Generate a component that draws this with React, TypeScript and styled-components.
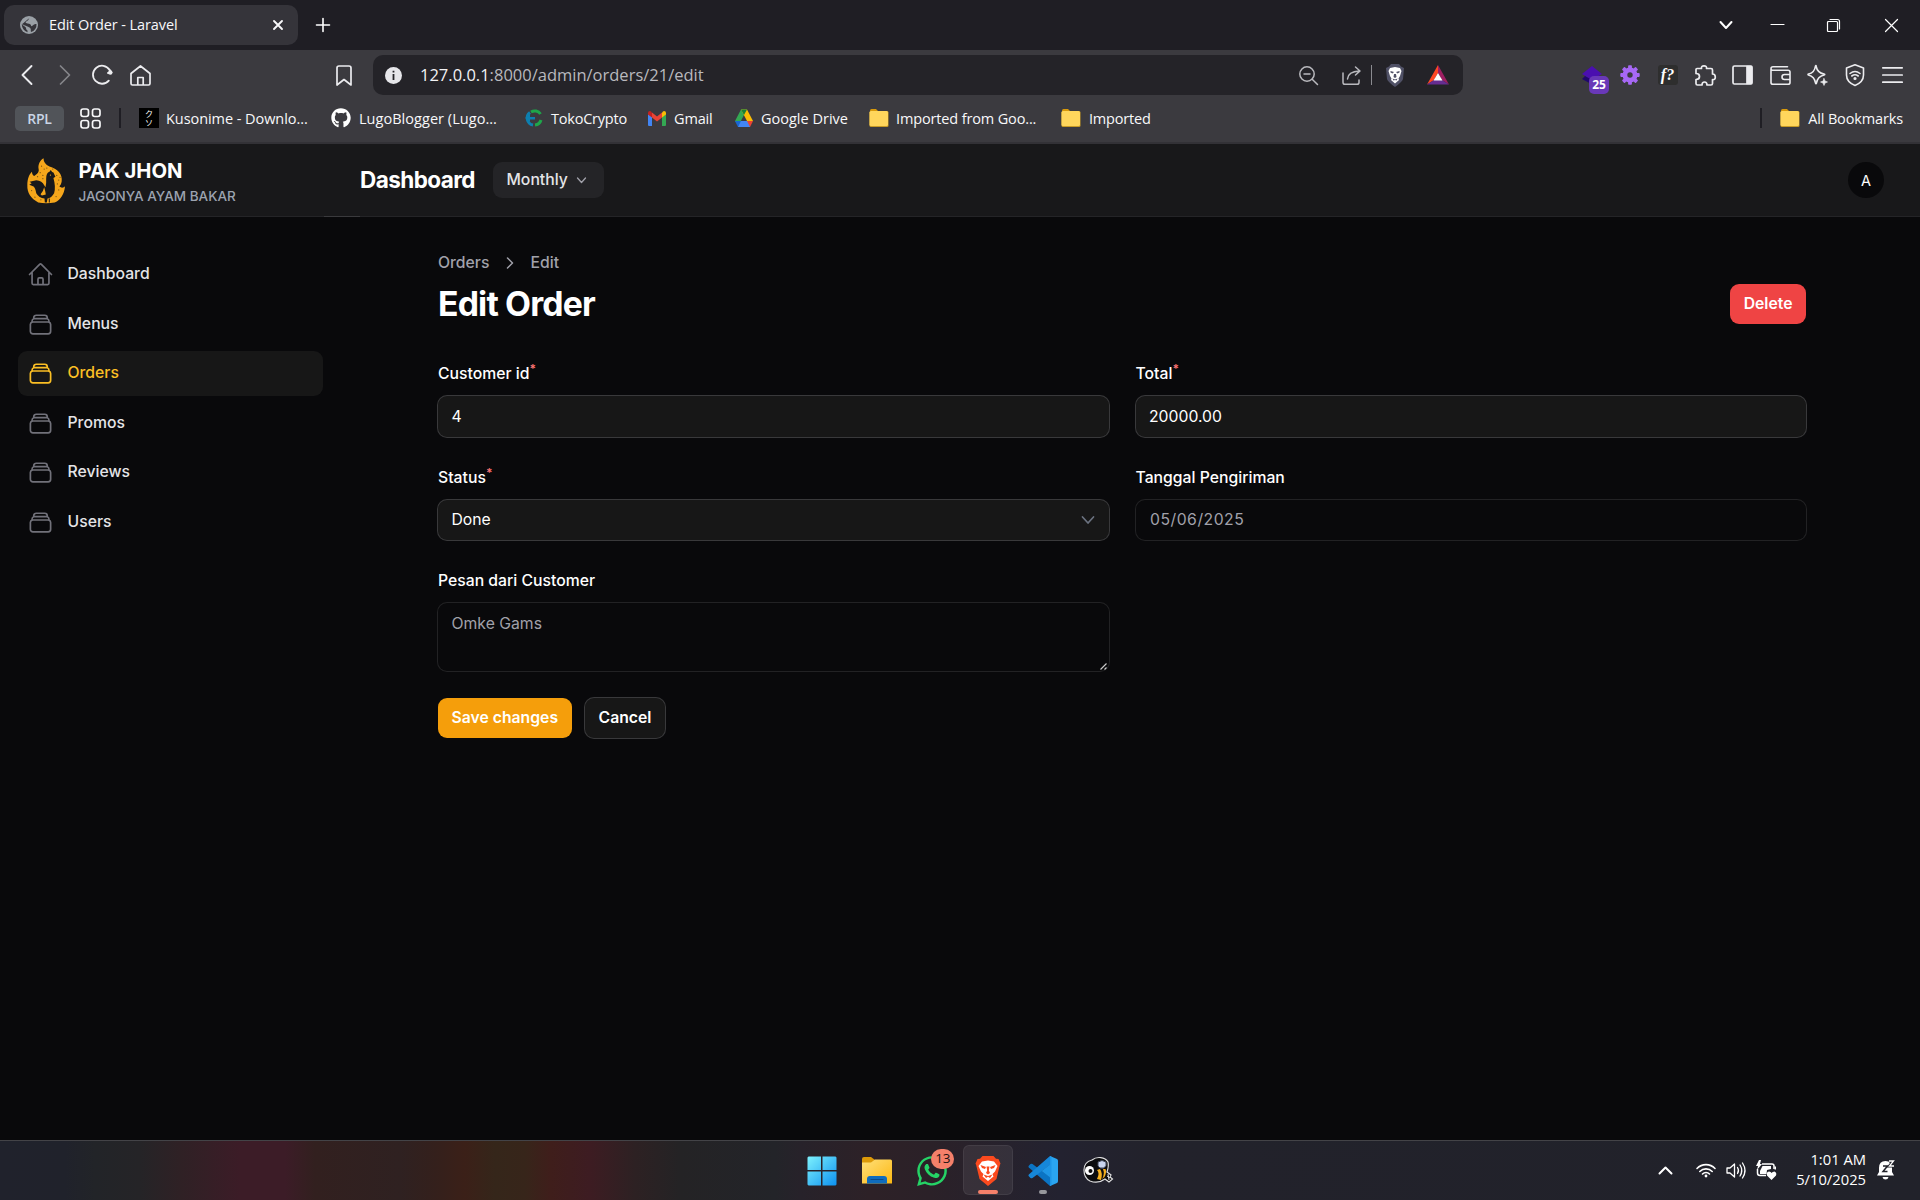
import React from "react";
import styled, { createGlobalStyle, css } from "styled-components";
import { HiOutlineHome, HiOutlineRectangleStack } from "react-icons/hi2";
import { FaGithub, FaWhatsapp } from "react-icons/fa";

const SYSTEM = `"Open Sans", "Noto Sans", sans-serif`;
const PAGE = `Inter, "Liberation Sans", sans-serif`;

const GlobalStyle = createGlobalStyle`
  * { box-sizing: border-box; }
  html, body { margin: 0; padding: 0; background: #09090b; }
  body { width: 1920px; height: 1200px; overflow: hidden; }
  svg { display: block; flex: none; overflow: visible; }
  button { border: 0; margin: 0; padding: 0; background: none; color: inherit; font: inherit; }
`;

const Screen = styled.div`
  width: 1920px;
  height: 1200px;
  display: flex;
  flex-direction: column;
  background: #09090b;
  color: #fff;
  font-family: ${PAGE};
  overflow: hidden;
`;

/* ---------- browser ---------- */

const TabStrip = styled.div`
  height: 50px;
  flex: none;
  display: flex;
  align-items: center;
  background: #1f1e24;
  padding-left: 4px;
  font-family: ${SYSTEM};
`;

const Tab = styled.div`
  width: 294px;
  height: 40px;
  border-radius: 10px;
  background: #35343a;
  display: flex;
  align-items: center;
  padding: 0 15px 0 16px;
  font-size: 14.5px;
  letter-spacing: -0.1px;
  color: #f8f8fa;
`;

const TabTitle = styled.span`
  flex: 1;
  margin-left: 11px;
  padding-bottom: 2px;
  white-space: nowrap;
`;

const NewTab = styled.button`
  margin-left: 18px;
`;

const WindowControls = styled.div`
  margin-left: auto;
  display: flex;
  align-items: center;
`;

const Slot = styled.div<{ $w: number }>`
  width: ${(p) => p.$w}px;
  flex: none;
  display: flex;
  align-items: center;
  justify-content: center;
`;

const Toolbar = styled.div`
  height: 50px;
  flex: none;
  display: flex;
  align-items: center;
  background: #3b3a3f;
  padding-left: 8px;
  font-family: ${SYSTEM};
  color: #ececef;
`;

const AddressBar = styled.div`
  width: 1090px;
  height: 40px;
  margin-left: 12px;
  border-radius: 10px;
  background: #242328;
  display: flex;
  align-items: center;
  padding-left: 12px;
  padding-right: 5px;
`;

const Address = styled.span`
  margin-left: 18px;
  padding-bottom: 2px;
  flex: 1;
  font-size: 16.5px;
  color: #b9b9be;
  b { font-weight: 400; color: #f2f2f4; }
`;

const BarDivider = styled.i`
  width: 1px;
  height: 20px;
  background: #8b8b90;
`;

const Extensions = styled.div`
  display: flex;
  margin-left: auto;
  padding-right: 8px;
`;

const BadgedExtension = styled.div`
  position: relative;
  width: 28px;
  height: 28px;
  margin-top: 9px;
`;

const ExtensionCount = styled.span`
  position: absolute;
  left: 7px;
  top: 10px;
  width: 20px;
  height: 18px;
  border-radius: 5px;
  background: #6938b8;
  font-size: 12px;
  font-weight: 700;
  line-height: 18px;
  text-align: center;
  color: #fff;
`;

const FunctionExtension = styled.div`
  width: 20px;
  height: 20px;
  border-radius: 3px;
  background: #2e2e2e;
  font: italic 700 16px/19px "Liberation Serif", serif;
  text-align: center;
  color: #fff;
`;

const Bookmarks = styled.div`
  height: 44px;
  flex: none;
  display: flex;
  align-items: center;
  padding: 0 17px 6px 15px;
  background: #3b3a3f;
  border-bottom: 2px solid #323136;
  font-family: ${SYSTEM};
  font-size: 14.5px;
  color: #f8f8fa;
`;

const GroupChip = styled.div`
  width: 49px;
  height: 25px;
  border-radius: 5px;
  background: #515459;
  color: #c9d5e6;
  font-size: 14px;
  font-weight: 600;
  letter-spacing: -0.2px;
  line-height: 25px;
  text-align: center;
  margin-right: 16px;
`;

const DarkRule = styled.i<{ $ml?: string; $mr: number }>`
  width: 2px;
  height: 20px;
  background: #1f1e24;
  margin-left: ${(p) => p.$ml ?? "0"};
  margin-right: ${(p) => p.$mr}px;
`;

const Bookmark = styled.div<{ $w?: number; $ls?: number; $gap?: number }>`
  width: ${(p) => (p.$w ? p.$w + "px" : "auto")};
  flex: none;
  display: flex;
  align-items: center;
  gap: ${(p) => p.$gap ?? 8}px;
  white-space: nowrap;
  letter-spacing: ${(p) => p.$ls ?? -0.14}px;
`;

const KanaIcon = styled.span`
  width: 20px;
  height: 20px;
  background: #000;
  color: #fff;
  display: flex;
  flex-direction: column;
  align-items: center;
  justify-content: center;
  font: 8px/9px "Noto Sans CJK JP", sans-serif;
  letter-spacing: 0;
`;

/* ---------- page ---------- */

const TopBar = styled.header`
  height: 73px;
  flex: none;
  display: flex;
  align-items: center;
  padding: 0 36px 0 27px;
  background: #18181a;
  border-bottom: 1px solid #242427;
  position: relative;
`;

const BarSeam = styled.i`
  position: absolute;
  left: 324px;
  bottom: -1px;
  width: 36px;
  height: 1px;
  background: #3a3a3d;
`;

const Brand = styled.div`
  width: 333px;
  display: flex;
  gap: 13.5px;
  align-items: center;
`;

const BrandName = styled.div`
  font-size: 20.25px;
  font-weight: 700;
  line-height: 27px;
`;

const BrandTagline = styled.div`
  font-size: 13.5px;
  font-weight: 500;
  line-height: 18px;
  margin: 3px 0 -1px;
  color: #9ca3af;
`;

const BarTitle = styled.div`
  font-size: 22.5px;
  font-weight: 700;
  letter-spacing: -0.56px;
  width: 133px;
  padding-bottom: 1px;
  white-space: nowrap;
`;

const PeriodButton = styled.button`
  width: 111px;
  height: 36px;
  border-radius: 9px;
  background: #242427;
  display: flex;
  align-items: center;
  gap: 9px;
  padding-left: 13.5px;
  font-size: 15.75px;
  font-weight: 500;
  color: #e4e4e7;
  span { padding-bottom: 2px; }
`;

const Avatar = styled.div`
  width: 36px;
  height: 36px;
  margin-left: auto;
  border-radius: 50%;
  background: #09090b;
  font-size: 14.5px;
  line-height: 37px;
  text-align: center;
`;

const Body = styled.div`
  flex: 1;
  min-height: 0;
  display: flex;
`;

const Sidebar = styled.nav`
  width: 324px;
  padding: 34.75px 1px 0 18px;
  display: flex;
  flex-direction: column;
  gap: 4.5px;
`;

const NavItem = styled.a<{ $active?: boolean }>`
  height: 45px;
  border-radius: 9px;
  padding: 0 9px 1px;
  display: flex;
  align-items: center;
  gap: 13.5px;
  font-size: 15.75px;
  font-weight: 500;
  color: #e4e4e7;
  svg { color: #71717a; margin-top: 2px; }
  ${(p) =>
    p.$active &&
    css`
      background: #171717;
      color: #fbbf24;
      svg { color: #fbbf24; }
    `}
`;

const Main = styled.main`
  flex: 1;
  padding: 35px 114px 0;
`;

const Breadcrumbs = styled.div`
  height: 22.5px;
  display: flex;
  align-items: center;
  gap: 14px;
  font-size: 15.75px;
  font-weight: 500;
  color: #a1a1aa;
  span { padding-bottom: 2px; }
`;

const Heading = styled.div`
  display: flex;
  justify-content: space-between;
  align-items: center;
  margin: 9px 0 36px;
`;

const Title = styled.h1`
  margin: 0;
  font-size: 33.75px;
  line-height: 40.5px;
  font-weight: 700;
  letter-spacing: -0.84px;
`;

const Button = styled.button<{ $bg: string; $ring?: boolean }>`
  height: 40px;
  padding: 0 13.5px;
  border-radius: 9px;
  background: ${(p) => p.$bg};
  font-size: 15.75px;
  font-weight: 600;
  white-space: nowrap;
  box-shadow: ${(p) => (p.$ring ? "0 0 0 1px #39393b" : "none")};
`;

const Form = styled.div`
  display: grid;
  grid-template-columns: 1fr 1fr;
  gap: 27px;
`;

const FieldBox = styled.div`
  display: flex;
  flex-direction: column;
  gap: 9px;
`;

const Label = styled.label`
  height: 27px;
  line-height: 27px;
  font-size: 15.75px;
  font-weight: 500;
  sup {
    font-size: 11.8px;
    font-weight: 700;
    line-height: 0;
    vertical-align: 6.5px;
    color: #f87171;
  }
`;

const Control = styled.div<{ $disabled?: boolean; $h?: number }>`
  height: ${(p) => p.$h ?? 40.5}px;
  border-radius: 9px;
  padding: 0 15px 0 13.5px;
  display: flex;
  align-items: ${(p) => (p.$h ? "flex-start" : "center")};
  justify-content: space-between;
  padding-top: ${(p) => (p.$h ? "6.75px" : "0")};
  font-size: 15.75px;
  line-height: 27px;
  background: ${(p) => (p.$disabled ? "transparent" : "#171717")};
  color: ${(p) => (p.$disabled ? "#a1a1aa" : "#fff")};
  box-shadow: 0 0 0 1px ${(p) => (p.$disabled ? "#222224" : "#39393b")};
`;

const DateText = styled.span`
  padding-left: 1px;
  letter-spacing: 0.5px;
`;

const ResizeGrip = styled.svg`
  align-self: flex-end;
  margin: 0 -13px 0.5px 0;
`;

const Actions = styled.div`
  display: flex;
  gap: 13.5px;
  margin-top: 27px;
`;

/* ---------- taskbar ---------- */

const Taskbar = styled.footer`
  height: 60px;
  flex: none;
  display: grid;
  grid-template-columns: 1fr 326px 1fr;
  align-items: center;
  border-top: 1px solid #434347;
  font-family: ${SYSTEM};
  background: linear-gradient(
    90deg,
    #20222c 0, #20222b 65px, #222428 95px, #252427 140px, #2f2125 180px, #3c1c27 240px,
    #3c1c27 285px, #32201f 315px, #2f2121 400px, #34201c 435px, #3b2018 465px, #35261a 495px,
    #37251a 525px, #3f1e1b 550px, #3d1c22 590px, #2d2123 635px, #242325 680px, #232429 775px,
    #27222a 800px, #2d2127 870px, #2b2128 930px, #232230 1060px, #22222b 1150px, #21222a 1920px
  );
`;

const Pinned = styled.div`
  grid-column: 2;
  display: flex;
  justify-content: space-between;
  align-items: center;
  padding-bottom: 1px;
`;

const AppTile = styled.div<{ $active?: boolean }>`
  position: relative;
  width: 50px;
  height: 50px;
  border-radius: 6px;
  display: flex;
  align-items: center;
  justify-content: center;
  padding-top: 1px;
  ${(p) =>
    p.$active &&
    css`
      background: #ffffff12;
      box-shadow: inset 0 0 0 1px #ffffff10;
    `}
`;

const Indicator = styled.i<{ $w: number; $c: string }>`
  position: absolute;
  bottom: 1px;
  left: calc(50% - ${(p) => p.$w / 2}px);
  width: ${(p) => p.$w}px;
  height: 4px;
  border-radius: 2px;
  background: ${(p) => p.$c};
`;

const UnreadBadge = styled.span`
  position: absolute;
  left: 24px;
  top: 4px;
  width: 23px;
  height: 20px;
  border-radius: 10px;
  background: #f5806a;
  color: #1c1313;
  font-size: 13.5px;
  line-height: 19px;
  text-align: center;
`;

const Tray = styled.div`
  display: flex;
  align-items: center;
  justify-content: flex-end;
  padding: 0 25px 1px 0;
`;

const Clock = styled.div`
  width: 85.500px;
  margin-right: 11px;
  padding-bottom: 3px;
  text-align: right;
  font-size: 14.75px;
  line-height: 20px;
  white-space: nowrap;
`;

/* ---------- drawings ---------- */

type LineProps = { w: number; h: number; sw?: number; color?: string; children: React.ReactNode };

const Line = ({ w, h, sw = 1.5, color = "currentColor", children }: LineProps) => (
  <svg width={w} height={h} viewBox={`0 0 ${w} ${h}`} fill="none" stroke={color} strokeWidth={sw} strokeLinecap="round" strokeLinejoin="round">
    {children}
  </svg>
);

const Globe = () => (
  <svg width="18" height="18" viewBox="0 0 18 18">
    <circle cx="9" cy="9" r="9" fill="#9aa0a6" />
    <path d="M10 1.500C8 3 9 4 7 5S5 7 7.500 7.500 11 8 11 9.500 13 9.500 14 8.500 16 8 16.500 8 A7.500 7.500 0 0 1 11 16C10.500 14 11.500 13 9.500 11.500S6 10 5 9.500 3 8.500 1.700 8.500 M1.700 8.500C2 12 4 15 7.500 16.300 L7.500 14.500C6.500 14 6 13 6 12S4 10 1.700 8.500Z" fill="#35343a" />
  </svg>
);

const Folder = () => (
  <svg width="20" height="20" viewBox="0 0 20 20">
    <path d="M1 2.500Q1 1 2.500 1H7L9 3V8H1Z" fill="#d99a0b" />
    <rect x="0.500" y="3" width="19" height="16" rx="1.500" fill="#c79a25" />
    <rect x="0.500" y="3" width="18.500" height="15" rx="1.500" fill="#ffd65c" />
  </svg>
);

const TokoIcon = () => (
  <svg width="18" height="18" viewBox="0 0 18 18" fill="none" strokeWidth="3">
    <path d="M6 3A7 7 0 0 1 15.500 5" stroke="#1ea64a" />
    <path d="M16 11A7 7 0 0 1 10 16" stroke="#1ea64a" />
    <path d="M5 3.500A7 7 0 0 0 8 16" stroke="#0d7fb0" />
    <path d="M0 9L5 5V8H10V10.500H5V13Z" fill="#0d7fb0" />
  </svg>
);

const GmailIcon = () => (
  <svg width="18" height="18" viewBox="0 0 18 18">
    <path d="M0 5L4 8V17H1Q0 17 0 16Z" fill="#4285f4" />
    <path d="M18 5L14 8V17H17Q18 17 18 16Z" fill="#34a853" />
    <path d="M4 3.500L9 7.500L14 3.500V8.500L9 12.500L4 8.500Z" fill="#ea4335" />
    <path d="M0 4Q0 2 2 2Q3 2 4 3.500V8.500L0 5.500Z" fill="#c5221f" />
    <path d="M18 4Q18 2 16 2Q15 2 14 3.500V8.500L18 5.500Z" fill="#fbbc04" />
  </svg>
);

const DriveIcon = () => (
  <svg width="18" height="18" viewBox="0 0 18 18">
    <path d="M6 .5H12L9 6L3.500 16.500L0 12Z" fill="#34a853" />
    <path d="M6 .5H12L18 12H12Z" fill="#fbbc04" />
    <path d="M6 .5H12L9 6Z" fill="#188038" />
    <path d="M3.500 12H14.500L15 18H3Z" fill="#4285f4" />
    <path d="M0 12H6L3 18Z" fill="#1967d2" />
    <path d="M12 12H18L15 18Z" fill="#ea4335" />
  </svg>
);

const BatIcon = () => (
  <svg width="22" height="20" viewBox="0 0 22 20">
    <path d="M11 0L0 19.500L7 15L11 8Z" fill="#ff4724" />
    <path d="M11 0L22 19.500L15 15L11 8Z" fill="#9e1f63" />
    <path d="M0 19.500H22L15 15H7Z" fill="#662d91" />
    <path d="M11 8L15.500 15.500H6.500Z" fill="#fff" />
  </svg>
);

const ShieldLion = () => (
  <svg width="20" height="23" viewBox="0 0 20 23">
    <path d="M6 0H14L16 2.500L19 4L18 15Q17 18 10 23Q3 18 2 15L1 4L4 2.500Z" fill="#505166" />
    <path d="M5 4L10 3L15 4L16.500 7L15 12L13.500 14.500L14 16L10 19.500L6 16L6.500 14.500L5 12L3.500 7Z" fill="#fff" />
    <path d="M5.500 7L9 8L7.500 9.500L5.500 8.500M14.500 7L11 8L12.500 9.500L14.500 8.500M9 10H11L11.500 13L10 14L8.500 13ZM7.500 14.500L10 15.500L12.500 14.500L11.500 16.500L10 16L8.500 16.500Z" fill="#505166" />
  </svg>
);

const Gear = () => (
  <svg width="20" height="20" viewBox="-10 -10 20 20">
    {[0, 45, 90, 135].map((a) => (
      <rect key={a} x="-1.900" y="-9.700" width="3.800" height="19.400" rx="0.800" fill="#a768f5" transform={`rotate(${a})`} />
    ))}
    <circle r="5" fill="none" stroke="#a768f5" strokeWidth="5" />
    <circle r="2.700" fill="#3b3a3f" />
  </svg>
);

const FlameRooster = () => (
  <svg width="38" height="45" viewBox="0 0 115 135">
    <path
      d="M50 0C50 12 56 19 68 25C92 32 108 48 105 70C104 77 102 81 98 86C106 92 112 88 115 85C113 108 102 127 84 134Q58 138 34 134C12 122 0 105 1 82C1 62 7 48 15 41C15 48 18 52 22 54C30 48 38 42 35 32C33 18 40 6 50 0Z"
      fill="#f5a61b"
    />
    <path
      d="M7 80L14 76L8 71L28 67Q46 68 52 82L56 88Q59 76 58 62Q58 44 68 41L72 36L76 42L80 43L86 56L80 60Q88 88 82 106Q74 120 62 122L60 134H54L53 122Q36 120 28 106Q25 90 20 86Z"
      fill="#18181a"
    />
    <path d="M66 122H69V134H66Z" fill="#18181a" />
    <path d="M48 99L52 88L55 99L57 110L45 113L41 109Z" fill="#f5a61b" />
    {[[44, 24], [52, 33], [40, 44], [48, 52], [32, 56], [90, 52], [96, 66], [92, 78], [96, 96], [88, 116], [14, 98], [24, 118], [60, 30], [48, 62], [78, 33], [42, 126], [100, 58]].map(
      ([x, y]) => (
        <circle key={`${x}-${y}`} cx={x} cy={y} r="1.900" fill="#7a5513" />
      )
    )}
    <circle cx="71" cy="51" r="2" fill="#f5a61b" />
  </svg>
);

const WindowsIcon = () => (
  <svg width="30" height="30" viewBox="0 0 30 30">
    <defs>
      <linearGradient id="win" x1="0" y1="0" x2="30" y2="30" gradientUnits="userSpaceOnUse">
        <stop stopColor="#7ff3fd" />
        <stop offset="1" stopColor="#0b8ff0" />
      </linearGradient>
    </defs>
    <path d="M1.500 .5H14V14H.5V1.500ZM15.500 .5H28.500L29.500 1.500V14H15.500ZM.5 15.500H14V29.500H1.500L.5 28.500ZM15.500 15.500H29.500V28.500L28.500 29.500H15.500Z" fill="url(#win)" />
  </svg>
);

const ExplorerIcon = () => (
  <svg width="30" height="27" viewBox="0 0 30 27">
    <defs>
      <linearGradient id="exp" x1="0" y1="0" x2="1" y2="1">
        <stop stopColor="#ffe07a" />
        <stop offset="1" stopColor="#fcb813" />
      </linearGradient>
    </defs>
    <path d="M0 2Q0 0 2 0H9L13 3V10H0Z" fill="#dd9a08" />
    <path d="M0 5.500H9L13 2.500H28.500Q30 2.500 30 4V26.500H0Z" fill="url(#exp)" />
    <path d="M5 26.500V22Q5 19 8 19H22Q25 19 25 22V26.500Z" fill="#0f6cbd" />
    <path d="M8.500 22.500H21.500" stroke="#0a4a8a" />
  </svg>
);

const BraveTaskIcon = () => (
  <svg width="26" height="30" viewBox="0 0 26 30">
    <path d="M7.500 0H18.500L21 2.700L23.500 3L25.500 7.500L24.700 9.500L21.500 23L13 30L4.500 23L1.300 9.500L.5 7.500L2.500 3L5 2.700Z" fill="#fb4a1e" />
    <path d="M7 5.500L13 4.500L19 5.500L22.500 10L20 15.500L17.500 18L18.500 20.500L13 25L7.500 20.500L8.500 18L6 15.500L3.500 10Z" fill="#fff" />
    <path d="M5.500 9L11 11L10 13L7 12ZM20.500 9L15 11L16 13L19 12ZM11.500 10.500H14.500L13.800 14.500L15 17L13 18.500L11 17L12.200 14.500ZM8.500 18.500L13 20L17.500 18.500L15 22L13 20.800L11 22Z" fill="#fb4a1e" />
  </svg>
);

const CodeIcon = () => (
  <svg width="30" height="30" viewBox="0 0 30 30">
    <path d="M22 0L29 3Q30 3.500 30 5V25Q30 26.500 29 27L22 30Z" fill="#2aa5f0" />
    <path d="M22 30L.8 11.500Q0 10.500 .8 9.700L2.500 8Q3.500 7.500 4.500 8L22.500 21.500Z" fill="#0b74c4" />
    <path d="M22 0L.8 18.500Q0 19.500 .8 20.300L2.500 22Q3.500 22.500 4.500 22L22.500 8.500Z" fill="#1687d9" />
    <path d="M22 0V8.500L13.500 15L22 21.500V30L23.500 29.200V.8Z" fill="#1e96e6" />
  </svg>
);

const BeeIcon = () => (
  <svg width="30" height="27" viewBox="0 0 30 27">
    <path d="M1 13C1 7 5 4 9 3C14-1 22 0 25 5C26 9 25 12 24 15L28 18L27 20L29.500 22L26 25L22 22C18 25 12 26 7 24C3 22 1 18 1 13Z" fill="#0c0c0e" stroke="#dededf" strokeWidth="1.200" />
    <path d="M14 13Q17 16 14 22L18 23Q20 16 17 12ZM20 12Q22 17 19 22L21.500 20Q24 15 22.500 12Z" fill="#f6b01e" />
    <path d="M15 5Q19 2 23 5Q24 9 21 11Q16 12 15 9Z" fill="#c9d4ee" stroke="#3c4354" />
    <circle cx="6.500" cy="13.500" r="4.500" fill="#fff" />
    <circle cx="7.500" cy="14" r="2" fill="#0c0c0e" />
    <path d="M24 19L27 21M25 17L26 23" stroke="#dededf" />
  </svg>
);

const WifiIcon = () => (
  <svg width="20" height="15" viewBox="0 0 20 15" fill="none" stroke="#fff" strokeWidth="1.600" strokeLinecap="round">
    <path d="M1 5.500A12.500 12.500 0 0 1 19 5.500M3.800 8.500A8.700 8.700 0 0 1 16.200 8.500M6.500 11A5 5 0 0 1 13.500 11" />
    <circle cx="10" cy="13" r="1.400" fill="#fff" stroke="none" />
  </svg>
);

const VolumeIcon = () => (
  <Line w={20} h={17} sw={1.300} color="#fff">
    <path d="M1 6V11H4L8.500 15V2L4 6ZM11.500 5.500Q13.500 8.500 11.500 11.500M14 3Q17.500 8.500 14 14M16.500 1Q21.500 8.500 16.500 16" />
  </Line>
);

const BatteryIcon = () => (
  <svg width="20" height="20" viewBox="0 0 20 20">
    <path d="M6 4H16Q18 4 18 6V9M1.500 9V13Q1.500 15.500 4 15.500H10" fill="none" stroke="#fff" strokeWidth="1.500" />
    <path d="M6.500 6H15V9L11 10L10.500 14H4V11ZM3 0L0 6H2L1 10L6 4H4L5 0Z" fill="#fff" />
    <path d="M15.500 20L11 15.500Q10 12 13 11.500Q15 11.500 15.500 13Q16.500 11.500 18.500 11.500Q21 12.500 20 15.500Z" fill="#fff" />
    <path d="M18.500 6.500H20V9.500H18.500Z" fill="#fff" />
  </svg>
);

const BellIcon = () => (
  <svg width="18" height="20" viewBox="0 0 18 20">
    <path d="M2 8Q2 1 8.500 1Q15 1 15 8V12L17 15.500H0L2 12ZM5.500 17H11.500Q11 19.500 8.500 19.500T5.500 17Z" fill="#fff" />
    <path d="M6 6H10.500L6 11.500H10.500" fill="none" stroke="#21222a" strokeWidth="1.500" />
    <path d="M12 1H16.500L12.500 6H17" fill="none" stroke="#21222a" strokeWidth="3" />
    <path d="M12 1H16.500L12.500 6H17" fill="none" stroke="#fff" strokeWidth="1.300" />
  </svg>
);

const Down = ({ w, color, sw = 1.300 }: { w: number; color: string; sw?: number }) => (
  <Line w={w} h={w / 2} sw={sw} color={color}>
    <path d={`M.5 0L${w / 2} ${w / 2}L${w - 0.5} 0`} />
  </Line>
);

/* ---------- content ---------- */

const navItems = ["Dashboard", "Menus", "Orders", "Promos", "Reviews", "Users"];

const Field = ({ label, required, children }: { label: string; required?: boolean; children: React.ReactNode }) => (
  <FieldBox>
    <Label>
      {label}
      {required && <sup>*</sup>}
    </Label>
    {children}
  </FieldBox>
);

const Browser = () => (
  <>
    <TabStrip>
      <Tab>
        <Globe />
        <TabTitle>Edit Order - Laravel</TabTitle>
        <Line w={10} h={10} sw={1.900}><path d="M1 1L9 9M9 1L1 9" /></Line>
      </Tab>
      <NewTab><Line w={14} h={14} sw={1.600}><path d="M7 .5V13.500M.5 7H13.500" /></Line></NewTab>
      <WindowControls>
        <Slot $w={50}><Down w={12} color="#fff" sw={2} /></Slot>
        <Slot $w={53}><Line w={13} h={2} sw={1.200} color="#fff"><path d="M0 .5H13" /></Line></Slot>
        <Slot $w={58}>
          <Line w={13} h={13} sw={1.200} color="#fff"><path d="M.5 3.500Q.5 2.500 1.500 2.500H9.500Q10.500 2.500 10.500 3.500V11.500Q10.500 12.500 9.500 12.500H1.500Q.5 12.500 .5 11.500ZM3 .5H10.500Q12.500 .5 12.500 2.500V10" /></Line>
        </Slot>
        <Slot $w={58}><Line w={13} h={13} sw={1.200} color="#fff"><path d="M.5 .5L12.500 12.500M12.500 .5L.5 12.500" /></Line></Slot>
      </WindowControls>
    </TabStrip>

    <Toolbar>
      <Slot $w={38}><Line w={10} h={18} sw={1.900}><path d="M9.500 0L.5 9L9.500 18" /></Line></Slot>
      <Slot $w={38}><Line w={10} h={18} sw={1.700} color="#85858a"><path d="M.5 0L9.500 9L.5 18" /></Line></Slot>
      <Slot $w={37}>
        <Line w={21} h={20} sw={1.800}>
          <path d="M16.800 15.600A9 9 0 1 1 17.500 4.800" />
          <circle cx="18.300" cy="7.500" r="2.200" fill="#ececef" stroke="none" />
          <path d="M17.500 4.800L19.500 7.500L16 8" />
        </Line>
      </Slot>
      <Slot $w={39}>
        <Line w={21} h={21} sw={1.700}><path d="M1 8.500L10.500 1L20 8.500V18.500Q20 20 18.500 20H2.500Q1 20 1 18.500ZM7.800 20V12.500H13.200V20" /></Line>
      </Slot>
      <Slot $w={167} />
      <Slot $w={34}><Line w={16} h={21} sw={1.700}><path d="M1 3Q1 1 3 1H13Q15 1 15 3V20L8 14.500L1 20Z" /></Line></Slot>
      <AddressBar>
        <svg width="17" height="17" viewBox="0 0 17 17">
          <circle cx="8.500" cy="8.500" r="8.500" fill="#e6e6ea" />
          <path d="M7.600 3.800H9.400V5.600H7.600ZM7.600 7H9.400V13H7.600Z" fill="#242328" />
        </svg>
        <Address><b>127.0.0.1</b>:8000/admin/orders/21/edit</Address>
        <Slot $w={48}><Line w={19} h={19} sw={1.500} color="#b9b9be"><circle cx="8" cy="8" r="7.200" /><path d="M13.200 13.200L18.500 18.500M5 8H11" /></Line></Slot>
        <Slot $w={39}><Line w={19} h={19} sw={1.500} color="#b9b9be"><path d="M1 7V16.500Q1 18.300 3 18.300H15Q17 18.300 17 16.500V14M5.500 13Q6 5.500 17.500 5M13.500 1L18 5L13.500 9" /></Line></Slot>
        <BarDivider />
        <Slot $w={46}><ShieldLion /></Slot>
        <Slot $w={40}><BatIcon /></Slot>
      </AddressBar>
      <Extensions>
        <Slot $w={34}>
          <BadgedExtension>
            <svg width="22" height="19" viewBox="0 0 22 19">
              <path d="M0 13L3 10L11 14L17 10L20 13L11 19Z" fill="#20076e" />
              <path d="M0 8L10 0L20 8L10 14Z" fill="#4a0fb0" />
            </svg>
            <ExtensionCount>25</ExtensionCount>
          </BadgedExtension>
        </Slot>
        <Slot $w={33}><Gear /></Slot>
        <Slot $w={43}><FunctionExtension>f?</FunctionExtension></Slot>
        <Slot $w={32}>
          <Line w={21} h={21} sw={1.700}>
            <path d="M1 4.500Q1 3.500 2 3.500H6.500Q6 .8 9 .8T11.500 3.500H16Q17.500 3.500 17.500 5V9Q20.300 9 20.300 12T17.500 14.700V18.500Q17.500 20 16 20H12Q12 17 9.500 17T7 20H2.500Q1 20 1 18.500V14.500Q4.500 14.500 4.500 11.500T1 8.500Z" />
          </Line>
        </Slot>
        <Slot $w={43}><Line w={21} h={20} sw={1.700}><rect x="1" y="1" width="19" height="18" rx="1.500" /><path d="M15 1.500H19.500V18.500H15Z" fill="#ececef" /></Line></Slot>
        <Slot $w={33}>
          <Line w={21} h={19} sw={1.600}><path d="M1 3V16.500Q1 18.300 3 18.300H18Q20 18.300 20 16.500V6Q20 4.200 18 4.200H2.500Q1 4.200 1 2.500T3 .8H17.500M20 8.500H14.500Q12 8.500 12 11T14.500 13.500H20" /></Line>
        </Slot>
        <Slot $w={41}>
          <Line w={21} h={21} sw={1.600}><path d="M9 1Q10.500 8 17 9Q18.500 9.500 17 10Q10.500 11.500 9.500 18Q9 19.500 8.500 18Q7.500 11.500 1.500 10Q.5 9.500 1.500 9Q7.500 8 8.500 1Q9 0 9 1Z" /><path d="M17 13.500L18 16L20.500 17L18 18L17 20.500L16 18L13.500 17L16 16Z" fill="#ececef" strokeWidth=".6" /></Line>
        </Slot>
        <Slot $w={34}>
          <Line w={20} h={22} sw={1.600}><path d="M10 .8L18.500 4V11Q18.500 18 10 21.500Q1.500 18 1.500 11V4ZM5 9.500Q10 5.500 15 9.500M6.800 12Q10 9.500 13.200 12" /><circle cx="10" cy="14.500" r=".8" fill="#ececef" /></Line>
        </Slot>
        <Slot $w={40}><Line w={21} h={16} sw={1.700}><path d="M.8 .8H20.200M.8 8H20.200M.8 15.200H20.200" /></Line></Slot>
      </Extensions>
    </Toolbar>

    <Bookmarks>
      <GroupChip>RPL</GroupChip>
      <Line w={21} h={21} sw={1.700}>
        <rect x="1" y="1" width="7.500" height="7.500" rx="2.200" /><rect x="12.500" y="1" width="7.500" height="7.500" rx="2.200" />
        <rect x="1" y="12.500" width="7.500" height="7.500" rx="2.200" /><rect x="12.500" y="12.500" width="7.500" height="7.500" rx="2.200" />
      </Line>
      <DarkRule $ml="18px" $mr={18} />
      <Bookmark $w={192} $ls={-0.06} $gap={7}><KanaIcon><span>ク</span><span>ソ</span></KanaIcon>Kusonime - Downlo...</Bookmark>
      <Bookmark $w={194} $ls={0.04}><FaGithub size={20} color="#fff" />LugoBlogger (Lugo...</Bookmark>
      <Bookmark $w={123} $ls={-0.22}><TokoIcon />TokoCrypto</Bookmark>
      <Bookmark $w={87}><GmailIcon />Gmail</Bookmark>
      <Bookmark $w={134} $ls={0}><DriveIcon />Google Drive</Bookmark>
      <Bookmark $w={192} $gap={7}><Folder />Imported from Goo...</Bookmark>
      <Bookmark $ls={-0.2}><Folder />Imported</Bookmark>
      <DarkRule $ml="auto" $mr={18} />
      <Bookmark><Folder />All Bookmarks</Bookmark>
    </Bookmarks>
  </>
);

const Page = () => (
  <>
    <TopBar>
      <Brand>
        <FlameRooster />
        <div>
          <BrandName>PAK JHON</BrandName>
          <BrandTagline>JAGONYA AYAM BAKAR</BrandTagline>
        </div>
      </Brand>
      <BarTitle>Dashboard</BarTitle>
      <PeriodButton>
        <span>Monthly</span>
        <Down w={9} color="#a1a1aa" />
      </PeriodButton>
      <Avatar>A</Avatar>
      <BarSeam />
    </TopBar>
    <Body>
      <Sidebar>
        {navItems.map((name) => (
          <NavItem key={name} $active={name === "Orders"}>
            {name === "Dashboard" ? <HiOutlineHome size={27} /> : <HiOutlineRectangleStack size={27} />}
            {name}
          </NavItem>
        ))}
      </Sidebar>
      <Main>
        <Breadcrumbs>
          <span>Orders</span>
          <Slot $w={13}><Line w={6} h={10} sw={1.500}><path d="M.5 0L5.500 5L.5 10" /></Line></Slot>
          <span>Edit</span>
        </Breadcrumbs>
        <Heading>
          <Title>Edit Order</Title>
          <Button $bg="#ef4444">Delete</Button>
        </Heading>
        <Form>
          <Field label="Customer id" required><Control>4</Control></Field>
          <Field label="Total" required><Control>20000.00</Control></Field>
          <Field label="Status" required>
            <Control>Done<Down w={12} color="#6b7280" sw={1.700} /></Control>
          </Field>
          <Field label="Tanggal Pengiriman"><Control $disabled><DateText>05/06/2025</DateText></Control></Field>
          <Field label="Pesan dari Customer">
            <Control $disabled $h={67.5}>
              Omke Gams
              <ResizeGrip width="7" height="7" viewBox="0 0 7 7" fill="none" stroke="#c9c9c9" strokeWidth="1.200">
                <path d="M.5 6.500L6.500 .5M4.500 6.500L6.500 4.500" />
              </ResizeGrip>
            </Control>
          </Field>
        </Form>
        <Actions>
          <Button $bg="#f59e0b">Save changes</Button>
          <Button $bg="#171717" $ring>Cancel</Button>
        </Actions>
      </Main>
    </Body>
  </>
);

const DesktopBar = () => (
  <Taskbar>
    <Pinned>
      <AppTile><WindowsIcon /></AppTile>
      <AppTile><ExplorerIcon /></AppTile>
      <AppTile><FaWhatsapp size={34} color="#25d366" /><UnreadBadge>13</UnreadBadge></AppTile>
      <AppTile $active><BraveTaskIcon /><Indicator $w={20} $c="#f5806a" /></AppTile>
      <AppTile><CodeIcon /><Indicator $w={8} $c="#97979c" /></AppTile>
      <AppTile><BeeIcon /></AppTile>
    </Pinned>
    <Tray>
      <Slot $w={50}>
        <Line w={13} h={7} sw={2} color="#fff"><path d="M.5 6.500L6.500 .5L12.500 6.500" /></Line>
      </Slot>
      <Slot $w={30}><WifiIcon /></Slot>
      <Slot $w={30}><VolumeIcon /></Slot>
      <Slot $w={30}><BatteryIcon /></Slot>
      <Clock>
        <div>1:01 AM</div>
        <div>5/10/2025</div>
      </Clock>
      <BellIcon />
    </Tray>
  </Taskbar>
);

export default function App() {
  return (
    <Screen>
      <GlobalStyle />
      <Browser />
      <Page />
      <DesktopBar />
    </Screen>
  );
}
